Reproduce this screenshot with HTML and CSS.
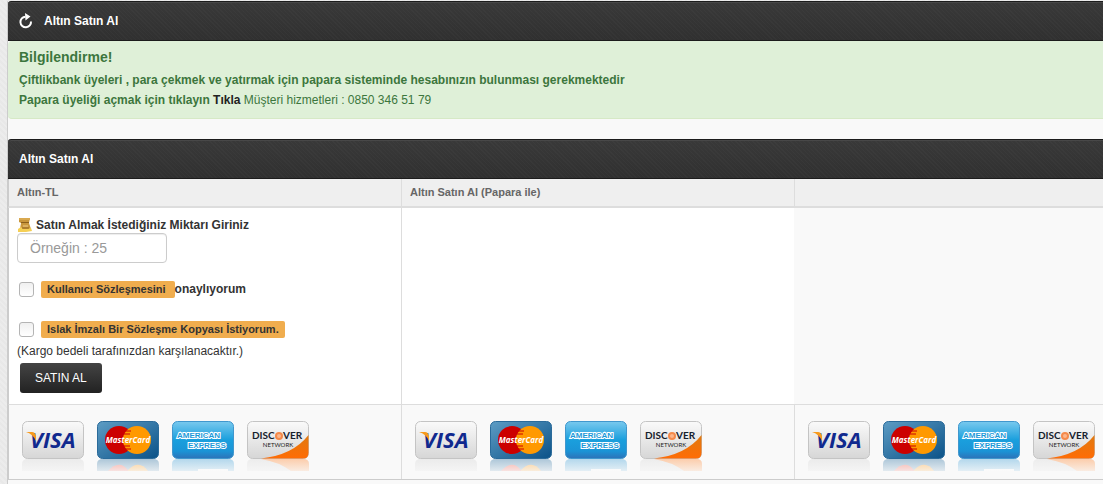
FILE: index.html
```html
<!DOCTYPE html>
<html lang="tr">
<head>
  <meta charset="UTF-8">
  <meta name="viewport" content="width=device-width, initial-scale=1.0">
  <title>Altın Satın Al</title>
  <link rel="stylesheet" href="styles.css">
</head>
<body>
  <!-- Kart logoları -->
  <svg class="sprite" aria-hidden="true">
    <defs>
      <linearGradient id="silver" x1="0" y1="0" x2="0" y2="1">
        <stop offset="0" stop-color="#fafafa"/>
        <stop offset="1" stop-color="#d6d6d6"/>
      </linearGradient>
      <linearGradient id="navy" x1="0" y1="0" x2="1" y2="1">
        <stop offset="0" stop-color="#5d9cc4"/>
        <stop offset="1" stop-color="#0b5288"/>
      </linearGradient>
      <linearGradient id="sky" x1="0" y1="0" x2="0" y2="1">
        <stop offset="0" stop-color="#79c9ee"/>
        <stop offset="0.5" stop-color="#1a9fdd"/>
        <stop offset="0.8" stop-color="#1b94d6"/>
        <stop offset="1" stop-color="#2d72b8"/>
      </linearGradient>
      <linearGradient id="orange" x1="0" y1="0" x2="0" y2="1">
        <stop offset="0" stop-color="#e07a10"/>
        <stop offset="1" stop-color="#ff6c05"/>
      </linearGradient>
      <linearGradient id="fade" x1="0" y1="0" x2="0" y2="1">
        <stop offset="0" stop-color="#f9f9f9" stop-opacity="0.6"/>
        <stop offset="1" stop-color="#f9f9f9" stop-opacity="0.88"/>
      </linearGradient>
    </defs>
    <symbol id="visa" viewBox="0 0 62 50">
      <path d="M0 50V43Q0 38 6 38H56Q62 38 62 43V50z" fill="#d6d6d6"/>
      <rect y="38" width="62" height="12" fill="url(#fade)"/>
      <rect x="0.5" y="0.5" width="61" height="37" rx="5" fill="url(#silver)" stroke="#c4c4c4"/>
      <text x="8" y="27" class="visa-text">VISA</text>
      <path d="M4 11H10Q13 11 14 15L14 20Q11 13 4 11z" fill="#f79a1c"/>
    </symbol>
    <symbol id="mastercard" viewBox="0 0 62 50">
      <path d="M0 50V43Q0 38 6 38H56Q62 38 62 43V50z" fill="#3a7ba8"/>
      <path d="M11 50Q22 38 31 49V50z" fill="#f0402f"/>
      <path d="M31 50V49Q42 38 51 50z" fill="#ff9000"/>
      <rect y="38" width="62" height="12" fill="url(#fade)"/>
      <rect x="0.5" y="0.5" width="61" height="37" rx="5" fill="url(#navy)" stroke="#2b6b9a"/>
      <circle cx="22" cy="19" r="14" fill="#cc0000"/>
      <circle cx="40" cy="19" r="14" fill="#ff9900"/>
      <path d="M28 10H34M27 13H33M27 25H33M28 28H34" stroke="#cc0000"/>
      <text x="31" y="22" class="mastercard-text">MasterCard</text>
    </symbol>
    <symbol id="amex" viewBox="0 0 62 50">
      <path d="M0 50V43Q0 38 6 38H56Q62 38 62 43V50z" fill="#4aa5d9"/>
      <rect x="26" y="48" width="30" height="2" fill="#ffffff"/>
      <rect y="38" width="62" height="12" fill="url(#fade)"/>
      <rect x="0.5" y="0.5" width="61" height="37" rx="5" fill="url(#sky)" stroke="#4097cd"/>
      <text x="5" y="17" class="amex-text">AMERICAN</text>
      <text x="16" y="27" class="amex-text">EXPRESS</text>
    </symbol>
    <symbol id="discover" viewBox="0 0 62 50">
      <path d="M0 50V43Q0 38 6 38H56Q62 38 62 43V50z" fill="#dadada"/>
      <path d="M14 38H56Q62 38 62 43V50H44Q32 41 14 38z" fill="#ff8b38"/>
      <rect y="38" width="62" height="12" fill="url(#fade)"/>
      <rect x="0.5" y="0.5" width="61" height="37" rx="5" fill="url(#silver)" stroke="#c4c4c4"/>
      <path d="M61.500 14V32Q61.500 37.500 56 37.500H14Q46 34 61.500 14z" fill="url(#orange)"/>
      <text x="5" y="18" class="discover-text">DISC</text>
      <circle cx="32" cy="15" r="4" fill="#f58a4b"/>
      <circle cx="32" cy="15" r="2" fill="#fbb68c"/>
      <text x="36" y="18" class="discover-text">VER</text>
      <text x="31" y="26" class="network-text">NETWORK</text>
    </symbol>
  </svg>

  <main class="content">
    <header class="widget-title">
      <svg class="refresh" width="16" height="16" viewBox="0 0 16 16" aria-hidden="true">
        <path d="M13 8.500A5.300 5.300 0 1 1 7.500 3.700" fill="none" stroke="#fff" stroke-width="2"/>
        <path d="M7 0L12.500 3.500L7.500 7.500z" fill="#fff"/>
      </svg>
      <h5>Altın Satın Al</h5>
    </header>

    <div class="alert">
      <h4>Bilgilendirme!</h4>
      <p><strong>Çiftlikbank üyeleri , para çekmek ve yatırmak için papara sisteminde hesabınızın bulunması gerekmektedir</strong></p>
      <p><strong>Papara üyeliği açmak için tıklayın <a href="#">Tıkla</a></strong> Müşteri hizmetleri : 0850 346 51 79</p>
    </div>

    <header class="widget-title">
      <h5>Altın Satın Al</h5>
    </header>

    <div class="table-box">
      <table class="buy-table">
        <thead>
          <tr>
            <th>Altın-TL</th>
            <th>Altın Satın Al (Papara ile)</th>
            <th></th>
          </tr>
        </thead>
        <tbody>
          <tr>
            <td>
              <form class="buy-form">
                <label class="amount-label" for="amount">
                  <svg width="16" height="16" viewBox="0 0 16 16" aria-hidden="true">
                    <path d="M2 1H13L12 6L14 12Q8 16 3 12L4 6L2 5z" fill="#c8963c"/>
                    <path d="M2 1H13V3H2z" fill="#d9a950"/>
                    <path d="M4 5H12V6H4z" fill="#8b5e1a"/>
                    <path d="M6 8H11V10H6z" fill="#dcb160"/>
                    <path d="M1 12L4 10L6 12L10 12L14 11L15 14L9 15H1z" fill="#f5cf55"/>
                    <path d="M5 11H12" stroke="#94651f"/>
                  </svg>
                  Satın Almak İstediğiniz Miktarı Giriniz
                </label>
                <input type="text" class="amount" id="amount" placeholder="Örneğin : 25">
                <div class="check-row">
                  <input type="checkbox" id="agreement">
                  <label for="agreement"><span class="badge badge-wide">Kullanıcı Sözleşmesini</span>onaylıyorum</label>
                </div>
                <div class="check-row">
                  <input type="checkbox" id="copy">
                  <label for="copy"><span class="badge">Islak İmzalı Bir Sözleşme Kopyası İstiyorum.</span></label>
                </div>
                <p class="note">(Kargo bedeli tarafınızdan karşılanacaktır.)</p>
                <button type="button" class="buy-button">SATIN AL</button>
              </form>
            </td>
            <td></td>
            <td class="blank"></td>
          </tr>
          <tr class="cards-row">
            <td>
              <div class="cards">
                <svg role="img" aria-label="Visa"><use href="#visa"/></svg>
                <svg role="img" aria-label="MasterCard"><use href="#mastercard"/></svg>
                <svg role="img" aria-label="American Express"><use href="#amex"/></svg>
                <svg role="img" aria-label="Discover"><use href="#discover"/></svg>
              </div>
            </td>
            <td>
              <div class="cards">
                <svg role="img" aria-label="Visa"><use href="#visa"/></svg>
                <svg role="img" aria-label="MasterCard"><use href="#mastercard"/></svg>
                <svg role="img" aria-label="American Express"><use href="#amex"/></svg>
                <svg role="img" aria-label="Discover"><use href="#discover"/></svg>
              </div>
            </td>
            <td>
              <div class="cards">
                <svg role="img" aria-label="Visa"><use href="#visa"/></svg>
                <svg role="img" aria-label="MasterCard"><use href="#mastercard"/></svg>
                <svg role="img" aria-label="American Express"><use href="#amex"/></svg>
                <svg role="img" aria-label="Discover"><use href="#discover"/></svg>
              </div>
            </td>
          </tr>
        </tbody>
      </table>
    </div>
  </main>
</body>
</html>
```
FILE: styles.css
```css
* {
  box-sizing: border-box;
}

body {
  margin: 0;
  padding: 1px 0 0 7px;
  min-height: 100vh;
  display: flex;
  flex-direction: column;
  background: repeating-linear-gradient(45deg, #ececec 0 2px, #e8e8e8 2px 4px);
  color: #333;
  font-family: "Liberation Sans", Arial, sans-serif;
  font-size: 12px;
  line-height: 20px;
}

h4,
h5,
p {
  margin: 0;
}

.sprite {
  position: absolute;
  width: 0;
  height: 0;
}

.content {
  flex: 1;
  background-color: #f9f9f9;
  border-left: 1px solid #ccc;
  overflow: hidden;
}

/* Koyu başlık çubuğu */
.widget-title {
  display: flex;
  align-items: center;
  gap: 10px;
  height: 40px;
  padding: 0 11px;
  color: #fff;
  background:
    repeating-linear-gradient(45deg, rgba(255, 255, 255, 0.02) 0 1px, transparent 1px 3px),
    linear-gradient(#393939, #303030);
  border: 1px solid #1c1c1c;
  border-width: 1px 0;
  border-top-left-radius: 3px;
  box-shadow: inset 0 1px 0 #484848;
}

.widget-title h5 {
  font-size: 12px;
}

.refresh {
  margin-left: -1px;
}

.alert {
  margin-bottom: 20px;
  padding: 6px 11px 8px;
  color: #3c763d;
  background-color: #dff0d8;
  border: 1px solid #d6e9c6;
  border-width: 0 0 1px;
  border-radius: 4px 0 0 4px;
}

.alert h4 {
  font-size: 14px;
  line-height: 20px;
  margin-bottom: 3px;
}

.alert a {
  color: #222;
  text-decoration: none;
}

.table-box {
  overflow: hidden;
}

.buy-table {
  width: 1179px;
  table-layout: fixed;
  border-collapse: separate;
  border-spacing: 0;
  border-bottom: 1px solid #ccc;
}

.buy-table th,
.buy-table td {
  text-align: left;
  vertical-align: top;
  padding: 8px;
  border-left: 1px solid #ddd;
}

.buy-table th:first-child,
.buy-table td:first-child {
  border-left-color: #ccc;
}

.buy-table th {
  height: 29px;
  padding: 3px 8px 4px;
  font-size: 11px;
  color: #666;
  background-color: #efefef;
  border-bottom: 2px solid #ddd;
}

.buy-table td {
  background-color: #fff;
}

.buy-table td.blank {
  background-color: #f9f9f9;
  border-left-color: #f9f9f9;
}

.buy-table .cards-row td {
  padding: 16px 13px 8px;
  background-color: #f9f9f9;
  border-top: 1px solid #ddd;
}

.amount-label {
  display: flex;
  align-items: center;
  gap: 3px;
  height: 17px;
  line-height: 16px;
  font-weight: bold;
}

.amount {
  display: block;
  width: 150px;
  height: 30px;
  padding: 0 12px;
  font-family: inherit;
  font-size: 14px;
  color: #555;
  background-color: #fff;
  border: 1px solid #ccc;
  border-radius: 4px;
  box-shadow: inset 0 1px 1px rgba(0, 0, 0, 0.075);
}

.amount::placeholder {
  color: #999;
}

.check-row {
  display: flex;
  align-items: center;
  gap: 7px;
  height: 20px;
  margin: 16px 0 20px;
  font-weight: bold;
}

.check-row input {
  appearance: none;
  width: 15px;
  height: 15px;
  margin: 0 0 0 2px;
  background: linear-gradient(#f0f0f0, #fff);
  border: 1px solid #b4b4b4;
  border-radius: 3px;
}

.check-row input:checked {
  background: #f0ad4e;
}

.check-row label {
  display: flex;
  align-items: center;
}

.check-row + .check-row {
  margin-bottom: 2px;
}

.badge {
  height: 17px;
  padding: 0 6px;
  font-size: 11px;
  line-height: 17px;
  background-color: #f0ad4e;
  border-radius: 2px;
}

.badge-wide {
  padding-right: 9px;
}

.buy-button {
  display: block;
  height: 30px;
  margin: 2px 3px 3px;
  padding: 0 15px;
  font-family: inherit;
  font-size: 12px;
  color: #fff;
  background: linear-gradient(#444, #222);
  border: 0;
  border-radius: 3px;
  cursor: pointer;
}

.buy-button:hover {
  background: #222;
}

/* Kart logoları */
.cards {
  display: flex;
  gap: 13px;
}

.cards svg {
  flex: none;
  width: 62px;
  height: 50px;
}

.visa-text {
  font: italic bold 22px "Open Sans", sans-serif;
  fill: #10298e;
}

.mastercard-text {
  font: italic bold 8px "Open Sans", sans-serif;
  text-anchor: middle;
  fill: #fff;
}

.amex-text {
  font: bold 8px "Liberation Sans", Arial, sans-serif;
  fill: #1c9ad9;
  stroke: #fff;
  stroke-width: 2px;
  paint-order: stroke;
}

.discover-text {
  font: bold 10px Lato, sans-serif;
  fill: #16202c;
}

.network-text {
  font: 6px Lato, sans-serif;
  text-anchor: middle;
  fill: #222;
}
```
